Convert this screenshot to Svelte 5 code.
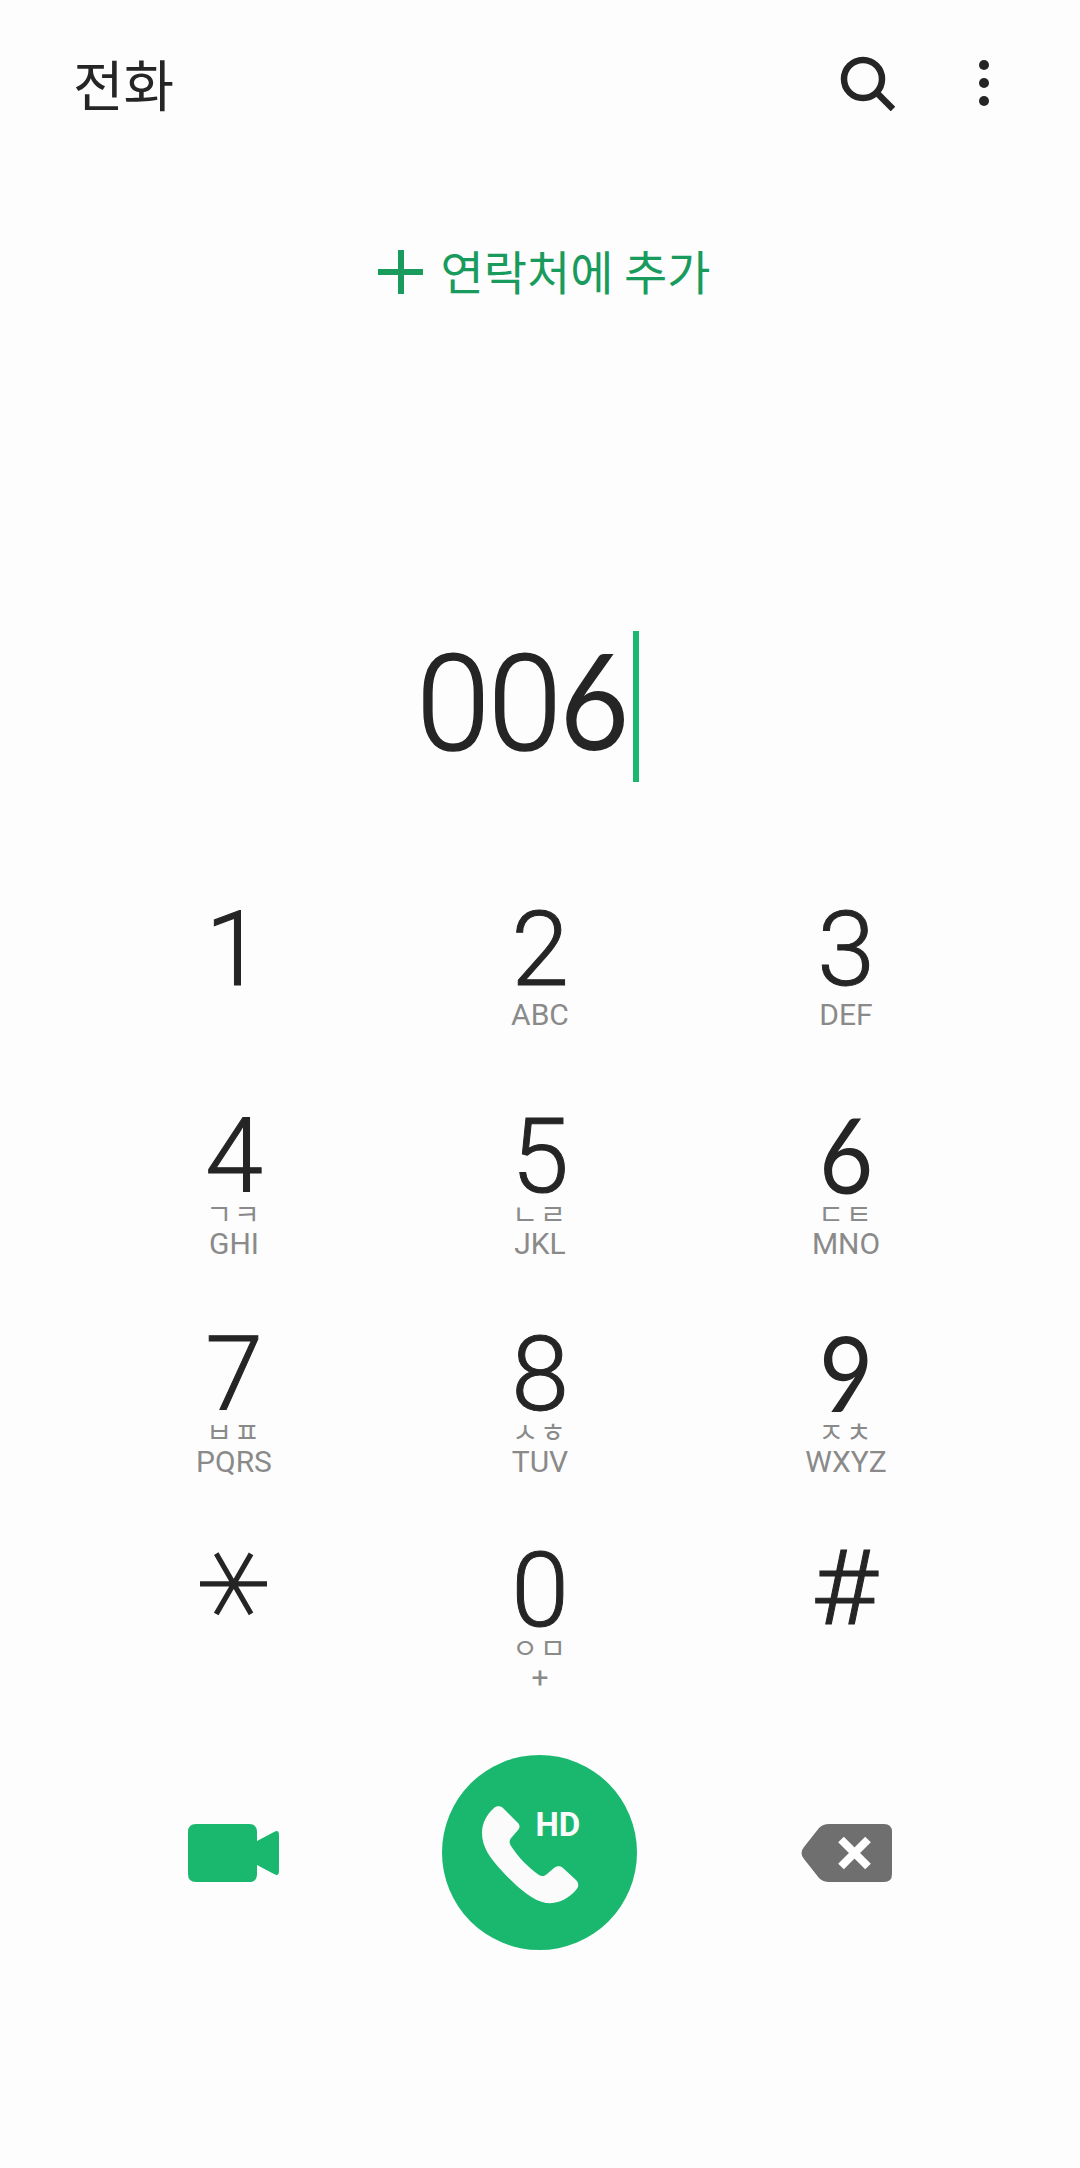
<script>
  const keys = [
    { digit: "1", sub: [] },
    { digit: "2", sub: ["ABC"] },
    { digit: "3", sub: ["DEF"] },
    { digit: "4", jamo: "ㄱㅋ", sub: ["GHI"] },
    { digit: "5", jamo: "ㄴㄹ", sub: ["JKL"] },
    { digit: "6", jamo: "ㄷㅌ", sub: ["MNO"], curvy: true },
    { digit: "7", jamo: "ㅂㅍ", sub: ["PQRS"] },
    { digit: "8", jamo: "ㅅㅎ", sub: ["TUV"] },
    { digit: "9", jamo: "ㅈㅊ", sub: ["WXYZ"], curvy: true },
    { digit: "*", star: true, sub: [] },
    { digit: "0", jamo: "ㅇㅁ", sub: ["+"] },
    { digit: "#", sub: [], hash: true },
  ];
</script>

<div class="phone">
  <header class="top">
    <h1 class="title">전화</h1>
    <div class="actions">
      <svg class="search" width="56" height="56" viewBox="0 0 56 56" fill="none" stroke="#252525" stroke-width="6.5">
        <circle cx="24" cy="24" r="19" />
        <path d="M38 38 L54 54" />
      </svg>
      <div class="dots">
        <span></span>
        <span></span>
        <span></span>
      </div>
    </div>
  </header>

  <div class="add">
    <svg width="45" height="44" viewBox="0 0 45 44" fill="#189b5c">
      <rect x="0" y="19" width="45" height="6" />
      <rect x="20" y="0" width="6" height="44" />
    </svg>
    <span>연락처에 추가</span>
  </div>

  <div class="dial">
    <span class="number">00<span class="six">6</span></span>
    <span class="caret"></span>
  </div>

  <div class="pad">
    {#each keys as key}
      <div class="key">
        <div class="digit" class:star={key.star} class:curvy={key.curvy} class:hash={key.hash}>{key.digit}</div>
        {#if key.jamo}
          <div class="jamo">{key.jamo}</div>
        {/if}
        {#each key.sub as s}
          <div class="letters">{s}</div>
        {/each}
      </div>
    {/each}
  </div>

  <div class="bottom">
    <svg class="video" width="92" height="58" viewBox="0 0 92 58" fill="#1ab86f">
      <path d="M8 0 H61 Q69 0 69 8 V17 L86 8 Q91 5 91 11 V47 Q91 53 86 50 L69 41 V50 Q69 58 61 58 H8 Q0 58 0 50 V8 Q0 0 8 0 Z" />
    </svg>
    <div class="call">
      <svg width="195" height="195" viewBox="0 0 195 195">
        <path
          fill="#fbfbfb"
          d="M52 53 C54 50.5 59 50.5 61 53 L76 68 C78 70 78 73 76 75 L70 82 C67 85 67 88 69 91 C76 102 86 112 97 120 C100 122 103 121 105 119 L112 113 C115 110.5 119 111 121 113 L134 125 C137 128 137 132 134 135 C126 144 116 149 104 148 C90 146 73 130 60 116 C48 103 40 92 40 78 C40 68 45 59 52 53 Z"
        />
      </svg>
      <span class="hd">HD</span>
    </div>
    <svg class="back" width="91" height="58" viewBox="0 0 91 58">
      <path fill="#6f6f6f" d="M28 0 H83 Q91 0 91 8 V50 Q91 58 83 58 H28 Q22 58 18 54 L3 35 Q-2 29 3 23 L18 4 Q22 0 28 0 Z" />
      <path stroke="#fff" stroke-width="8" d="M40 15.5 L67 42.5 M67 15.5 L40 42.5" />
    </svg>
  </div>
</div>

<style>
  :global(body) {
    margin: 0;
    background: #fdfdfd;
  }

  .phone {
    width: 1080px;
    height: 2168px;
    background: #fdfdfd;
    color: #252525;
    font-family: "Noto Sans CJK KR", "Noto Sans", sans-serif;
    overflow: hidden;
  }

  .top {
    display: flex;
    justify-content: space-between;
    align-items: center;
    height: 56px;
    padding: 54px 91px 1px 73px;
  }

  .title {
    margin: 0;
    font-size: 55px;
    font-weight: 400;
    line-height: 56px;
  }

  .actions {
    display: flex;
    align-items: center;
    gap: 84px;
    margin-top: 1px;
  }

  .dots {
    display: flex;
    flex-direction: column;
    gap: 8px;
  }

  .dots span {
    display: block;
    width: 10px;
    height: 10px;
    border-radius: 50%;
    background: #252525;
  }

  .add {
    display: flex;
    justify-content: center;
    align-items: center;
    gap: 18px;
    height: 60px;
    margin-top: 131px;
    padding-left: 8px;
    font-size: 47px;
    color: #189b5c;
  }

  .add span {
    margin-top: -6px;
  }

  .dial {
    display: flex;
    justify-content: center;
    align-items: center;
    height: 152px;
    margin-top: 328px;
    padding-right: 25px;
  }

  .number {
    font-family: Roboto, sans-serif;
    font-weight: 300;
    font-size: 133px;
    letter-spacing: -2px;
    line-height: 152px;
    margin-top: -8px;
    -webkit-text-stroke: 1.5px #252525;
  }

  .six {
    display: inline-block;
    font-family: Lato, sans-serif;
    font-weight: 400;
    letter-spacing: 0;
    -webkit-text-stroke: 0;
    transform: scaleX(0.9);
    margin: 0 -4px;
  }

  .caret {
    width: 6px;
    height: 151px;
    background: #1ab86f;
    margin-left: 4px;
  }

  .pad {
    display: grid;
    grid-template-columns: repeat(3, 306px);
    grid-template-rows: 207px 218px 216px 190px;
    justify-content: center;
    margin-top: 120px;
  }

  .key {
    display: flex;
    flex-direction: column;
    align-items: center;
  }

  .digit {
    font-family: Roboto, sans-serif;
    font-weight: 300;
    font-size: 104px;
    line-height: 96px;
    height: 96px;
    -webkit-text-stroke: 1px #252525;
  }

  .digit.curvy {
    font-family: Lato, sans-serif;
    font-weight: 400;
    font-size: 104px;
    -webkit-text-stroke: 0;
    transform: translateY(-3px) scaleX(0.9);
  }

  .digit.hash {
    transform: translate(-2px, -2px) scaleX(1.1);
  }

  .digit.star {
    font-family: "DejaVu Sans", sans-serif;
    font-size: 142px;
    -webkit-text-stroke: 2px #252525;
    transform: translate(-26px, -7px) rotate(90deg);
  }

  .jamo {
    margin-top: -6px;
    font-size: 28px;
    line-height: 28px;
    letter-spacing: 2px;
    color: #8a8a8a;
  }

  .letters {
    font-family: Roboto, sans-serif;
    font-size: 30px;
    line-height: 34px;
    color: #8a8a8a;
  }

  .bottom {
    display: grid;
    grid-template-columns: repeat(3, 306px);
    justify-content: center;
    justify-items: center;
    align-items: center;
    margin-top: 22px;
  }

  .call {
    position: relative;
    width: 195px;
    height: 195px;
    margin-left: -2px;
    border-radius: 50%;
    background: #1ab86f;
  }

  .call svg {
    display: block;
  }

  .hd {
    position: absolute;
    left: 94px;
    top: 50px;
    font-family: Roboto, sans-serif;
    font-weight: 700;
    font-size: 33px;
    line-height: 40px;
    color: #fbfbfb;
  }
</style>
